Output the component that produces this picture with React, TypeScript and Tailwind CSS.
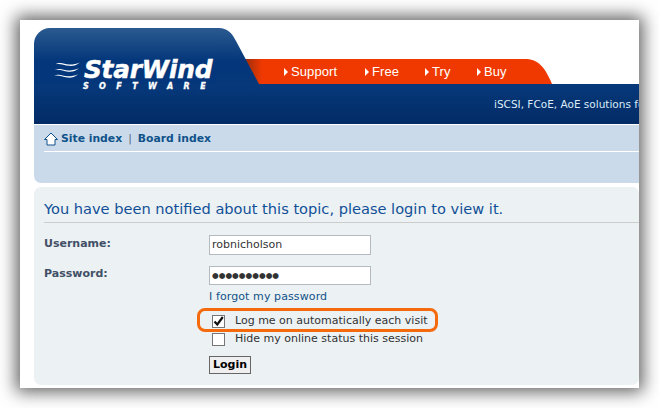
const verdana = "font-['DejaVu_Sans',Verdana,sans-serif]";

const navItems = ["Support", "Free", "Try", "Buy"];
const navWidths = ["w-[81px]", "w-[60px]", "w-[52px]", "w-auto"];

function Arrow() {
  return (
    <svg width="4" height="8" viewBox="0 0 4 8" className="mr-[3px]">
      <path d="M0 0l4 4-4 4z" fill="#fff" />
    </svg>
  );
}

function Waves() {
  return (
    <svg width="31" height="20" viewBox="0 0 31 20" fill="#fff" className="mt-[2px]">
      <path d="M2 3C8 0 12 3 18 3.500 22 3.800 26 3 31 1 27 4.500 22 5.500 18 5 12 4.500 8 1.800 2 3z" />
      <path d="M1 10C7 7 11 10 17 10.500 21 10.800 25 10 30 8 26 11.500 21 12.500 17 12 11 11.500 7 8.800 1 10z" />
      <path d="M0 17C6 14 10 17 16 17.500 20 17.800 24 17 29 15 25 18.500 20 19.500 16 19 10 18.500 6 15.800 0 17z" />
    </svg>
  );
}

function Box({ checked }: { checked?: boolean }) {
  return (
    <div className="flex h-[13px] w-[13px] items-center justify-center border border-[#767676] bg-white">
      {checked && (
        <svg width="11" height="11" viewBox="0 0 11 11" fill="none">
          <path d="M1.500 5.500l2.800 3L9.800 1" stroke="#111" strokeWidth="2.200" />
        </svg>
      )}
    </div>
  );
}

export default function App() {
  return (
    <div className="h-[408px] w-[659px] overflow-hidden bg-white p-5">
      <div className={`h-[368px] w-[619px] overflow-hidden bg-white pl-[14px] pt-2 shadow-[0_0_16px_4px_rgba(0,0,0,0.62)] ${verdana}`}>
        {/* Header */}
        <header className="w-[640px]">
          <div className="flex h-14">
            <div className="w-[182px] rounded-tl-[16px] bg-gradient-to-b from-[#2a5a8f] to-[#03367a] to-60% pl-5 pt-[30px]">
              <div className="flex items-start">
                <Waves />
                <div className="-mt-[2px] ml-[4px] text-white">
                  <div className="whitespace-nowrap text-[24.800px] font-bold italic leading-[27px] tracking-[-0.2px] [-webkit-text-stroke:0.5px_white]">StarWind</div>
                  <div className="-ml-px whitespace-nowrap text-[8px] font-bold italic leading-[7px] tracking-[10.400px] [-webkit-text-stroke:0.3px_white]">SOFTWARE</div>
                </div>
              </div>
            </div>
            <svg width="46" height="56" viewBox="0 0 46 56" className="relative shrink-0">
              <defs>
                <linearGradient id="slope" x1="0" y1="0" x2="0" y2="1">
                  <stop offset="0" stopColor="#2a5a8f" />
                  <stop offset="0.6" stopColor="#03367a" />
                  <stop offset="1" stopColor="#06387a" />
                </linearGradient>
                <linearGradient id="fade" x1="0" y1="0" x2="1" y2="0">
                  <stop offset="0.2" stopColor="#8a2a10" />
                  <stop offset="1" stopColor="#ef3900" />
                </linearGradient>
              </defs>
              <rect x="20" y="31" width="26" height="25" fill="url(#fade)" />
              <path d="M0 0h3c8 0 13 5 17 13l23 43H0z" fill="url(#slope)" />
            </svg>
            <div className="mt-[31px] flex h-[25px] w-[261px] items-center bg-[#ef3900] pl-[22px] font-['Liberation_Sans',Arial,sans-serif] text-[13px] tracking-[0.1px] text-white">
              {navItems.map((item, i) => (
                <div key={item} className={`flex items-center ${navWidths[i]}`}>
                  <Arrow />
                  {item}
                </div>
              ))}
            </div>
            <svg width="29" height="25" viewBox="0 0 29 25" className="mt-[31px] shrink-0">
              <path d="M0 0h2c12 0 19 6 27 25H0z" fill="#ef3900" />
            </svg>
          </div>
          <div className="flex h-10 items-center bg-gradient-to-b from-[#07397b] to-[#022b65] pl-[460px]">
            <span className="whitespace-nowrap text-[10.500px] leading-[40px] text-[#dcebf7]">iSCSI, FCoE, AoE solutions for</span>
          </div>
        </header>

        {/* Breadcrumb panel */}
        <nav className="mt-px h-[58px] rounded-bl-[7px] bg-[#cadaea] pl-[10px]">
          <div className="flex h-[27px] items-center border-b border-white pt-[2px] text-[10.800px] font-bold text-[#105289]">
            <svg width="14" height="14" viewBox="0 0 14 14" fill="#fff" stroke="#105289" className="mr-[3px]">
              <path d="M.5 7.500L7 1l6.500 6.500h-2.500v5.500H3V7.500z" />
            </svg>
            <span>Site index</span>
            <span className="mx-[6px] font-normal text-[#536482]">|</span>
            <span>Board index</span>
          </div>
        </nav>

        {/* Login panel */}
        <main className="mt-1 h-[198px] rounded-[7px] bg-[#ecf1f3] pl-[10px] text-[#333]">
          <h2 className="h-[36px] whitespace-nowrap border-b border-[#ccc] pt-[12px] text-[14.600px] leading-[19px] text-[#115098]">
            You have been notified about this topic, please login to view it.
          </h2>
          <div className="mt-3 flex h-5 items-start">
            <label className="w-[165px] pt-px text-[11px] font-bold leading-[15px] text-[#425067]">Username:</label>
            <div className="flex h-5 w-[162px] items-center border border-[#b4bac0] bg-white pl-[2px] text-[11px] text-[#333]">robnicholson</div>
          </div>
          <div className="mt-[11px] flex h-5 items-start">
            <label className="w-[165px] text-[11px] font-bold leading-[15px] text-[#425067]">Password:</label>
            <div className="flex h-[19px] w-[162px] items-center border border-[#b4bac0] bg-white pl-[2px] text-[7.700px] text-[#333]">●●●●●●●●●●</div>
          </div>
          <div className="ml-[165px] mt-[3px] text-[11px] leading-[15px] tracking-[0.1px] text-[#105289]">I forgot my password</div>
          <div className="relative ml-[168px] mt-[11px] flex h-[13px] items-center text-[11px] text-[#333]">
            <Box checked />
            <span className="ml-[10px]">Log me on automatically each visit</span>
            {/* Highlight drawn over the form */}
            <div className="absolute -left-[15px] -top-[7px] h-[24px] w-[241px] rounded-[8px] border-[3.500px] border-[#f56a0c]" />
          </div>
          <div className="ml-[168px] mt-[5px] flex h-[13px] items-center text-[11px] text-[#333]">
            <Box />
            <span className="ml-[10px]">Hide my online status this session</span>
          </div>
          <button className="ml-[165px] mt-[10px] flex h-[18px] w-[42px] items-center justify-center border border-[#666] bg-[#efefef] text-[11px] font-bold text-black">Login</button>
        </main>
      </div>
    </div>
  );
}
